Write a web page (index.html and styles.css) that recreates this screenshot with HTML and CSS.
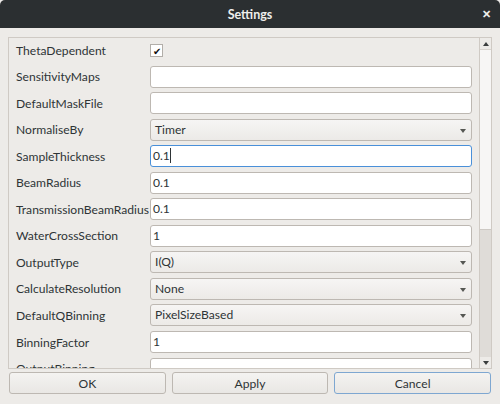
FILE: index.html
```html
<!DOCTYPE html>
<html lang="en">
<head>
  <meta charset="UTF-8" />
  <title>Settings</title>
  <link rel="stylesheet" href="styles.css">
</head>
<body>

<div class="window">
  <div class="titlebar">
    <span class="title">Settings</span>
    <span class="close">&#x2715;</span>
  </div>

  <div class="content">
    <div class="frame">
      <div class="rows">
        <div class="row">
          <label>ThetaDependent</label>
          <span class="check">&#x2714;</span>
        </div>
        <div class="row">
          <label>SensitivityMaps</label>
          <div class="field"></div>
        </div>
        <div class="row">
          <label>DefaultMaskFile</label>
          <div class="field"></div>
        </div>
        <div class="row">
          <label>NormaliseBy</label>
          <div class="combo">Timer<span class="arrow"></span></div>
        </div>
        <div class="row">
          <label>SampleThickness</label>
          <div class="field focused">0.1<span class="caret"></span></div>
        </div>
        <div class="row">
          <label>BeamRadius</label>
          <div class="field">0.1</div>
        </div>
        <div class="row">
          <label>TransmissionBeamRadius</label>
          <div class="field">0.1</div>
        </div>
        <div class="row">
          <label>WaterCrossSection</label>
          <div class="field">1</div>
        </div>
        <div class="row">
          <label>OutputType</label>
          <div class="combo">I(Q)<span class="arrow"></span></div>
        </div>
        <div class="row">
          <label>CalculateResolution</label>
          <div class="combo">None<span class="arrow"></span></div>
        </div>
        <div class="row">
          <label>DefaultQBinning</label>
          <div class="combo">PixelSizeBased<span class="arrow"></span></div>
        </div>
        <div class="row">
          <label>BinningFactor</label>
          <div class="field">1</div>
        </div>
        <div class="row">
          <label>OutputBinning</label>
          <div class="field"></div>
        </div>
      </div>

      <div class="scrollbar">
        <div class="step up"><span class="tri-up"></span></div>
        <div class="thumb"></div>
        <div class="track"></div>
        <div class="step down"><span class="tri-down"></span></div>
      </div>
    </div>

    <div class="buttons">
      <button>OK</button>
      <button>Apply</button>
      <button class="default">Cancel</button>
    </div>
  </div>
</div>

</body>
</html>
```

FILE: styles.css
```css
body {
  margin: 0;
  font-family: Lato, 'Noto Sans', sans-serif;
  font-size: 12.1px;
  color: #2e3436;
  background: #edebe8;
}

.window {
  width: 500px;
  height: 404px;
  overflow: hidden;
  background: #edebe8;
}

.titlebar {
  height: 28px;
  background: #2b2f31;
  border-radius: 5px 5px 0 0;
  display: flex;
  align-items: center;
  justify-content: center;
  position: relative;
}

.title {
  color: #eeeeec;
  font-weight: bold;
  font-size: 12.5px;
}

.close {
  position: absolute;
  right: 9px;
  top: 7px;
  color: #eeeeec;
  font-size: 11px;
  font-weight: bold;
}

.content {
  padding: 9px 8px 0 8px;
}

.frame {
  height: 330px;
  border: 1px solid #cfcac4;
  display: flex;
  overflow: hidden;
}

.rows {
  flex: 1;
  padding: 1px 7px 0 7px;
  overflow: hidden;
}

.row {
  display: grid;
  grid-template-columns: 134px 1fr;
  align-items: center;
  height: 22px;
  margin-bottom: 4.55px;
}

.row label {
  white-space: nowrap;
}

.check {
  width: 11px;
  height: 11px;
  border: 1px solid #b2aea9;
  background: #fff;
  font-size: 10px;
  line-height: 12px;
  text-align: center;
  color: #111;
}

.field {
  height: 20px;
  border: 1px solid #bdb8b2;
  border-radius: 3px;
  background: #fff;
  padding-left: 2px;
  line-height: 20px;
}

.field.focused {
  border-color: #4a90d9;
}

.caret {
  display: inline-block;
  width: 1px;
  height: 15px;
  background: #2e3436;
  vertical-align: -3px;
}

.combo {
  height: 20px;
  border: 1px solid #bdb8b2;
  border-radius: 3px;
  background: linear-gradient(#f6f5f4, #eceae7);
  padding-left: 4px;
  line-height: 20px;
  position: relative;
}

.arrow {
  position: absolute;
  right: 5px;
  top: 9px;
  border-left: 3.5px solid transparent;
  border-right: 3.5px solid transparent;
  border-top: 4px solid #555753;
}

.scrollbar {
  width: 11px;
  border-left: 1px solid #cfcac4;
  display: flex;
  flex-direction: column;
  background: #dfdcd8;
}

.step {
  height: 11px;
  background: #edebe8;
  display: flex;
  align-items: center;
  justify-content: center;
}

.tri-up {
  border-left: 3.5px solid transparent;
  border-right: 3.5px solid transparent;
  border-bottom: 4px solid #3a3d3e;
}

.tri-down {
  border-left: 3.5px solid transparent;
  border-right: 3.5px solid transparent;
  border-top: 4px solid #3a3d3e;
}

.thumb {
  height: 179px;
  background: #f7f6f5;
  border-top: 1px solid #d8d4cf;
  border-bottom: 1px solid #cdc9c4;
}

.track {
  flex: 1;
}

.buttons {
  display: grid;
  grid-template-columns: 1fr 1fr 1fr;
  gap: 6px;
  padding: 3px 1px 0 1px;
}

.buttons button {
  height: 22px;
  font-family: inherit;
  font-size: 12.1px;
  color: #2e3436;
  border: 1px solid #bdb8b2;
  border-radius: 3px;
  background: linear-gradient(#f4f3f1, #e9e7e4);
}

.buttons button.default {
  border-color: #7ea7d1;
}
```
